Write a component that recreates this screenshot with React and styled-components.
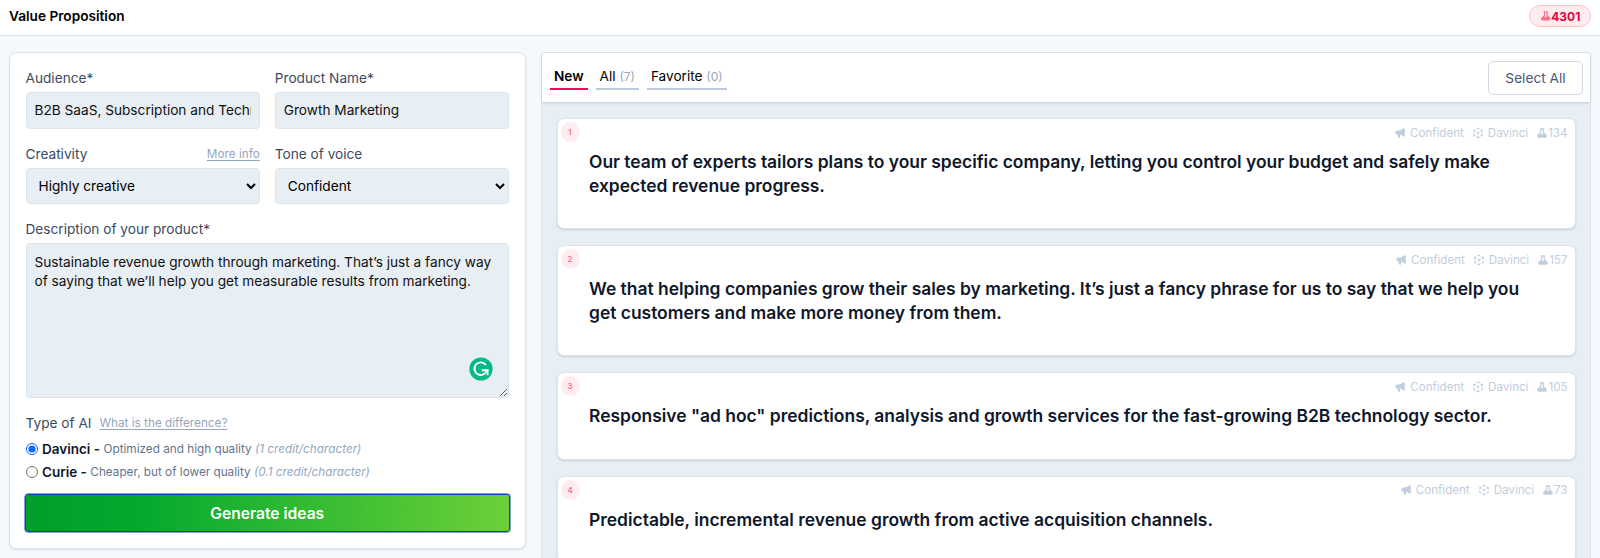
import React from 'react'
import styled, { createGlobalStyle } from 'styled-components';
import { HiBeaker, HiCubeTransparent, HiSpeakerphone } from 'react-icons/hi';

const GlobalStyle = createGlobalStyle`
    :root {
        --text: #0f172a;
        --label: #3b4a60;
        --muted: #64748b;
        --link: #94a7bf;
        --line: #dce5ee;
        --field: #e7eef4;
    }
    * {
        box-sizing: border-box;
    }
    body {
        margin: 0;
        background-color: #f5f9fc;
        color: #000;
        font-family: Inter, sans-serif;
        font-size: 13.66px;
        overflow: hidden;
    }
`;

const PageStyle = styled.div`
    height: 558px;
    overflow: hidden;
`;

const TopBar = styled.header`
    height: 36px;
    padding: 0 9px;
    display: flex;
    align-items: center;
    justify-content: space-between;
    background-color: #fff;
    border-bottom: 1px solid var(--line);
    h1 {
        margin: 0 0 3px;
        font-size: 13.65px;
        font-weight: 600;
    }
`;

const Credits = styled.span`
    height: 22px;
    width: 62px;
    margin-bottom: 3px;
    display: flex;
    align-items: center;
    justify-content: center;
    border: 1px solid #ffc2cc;
    border-radius: 11px;
    background-color: #ffecef;
    color: #e8003f;
    font-size: 12px;
    font-weight: 700;
    svg {
        color: #ff6c8a;
        font-size: 11.6px;
    }
`;

const Columns = styled.main`
    display: grid;
    grid-template-columns: 517px 1fr;
    align-items: start;
    gap: 15.5px;
    padding: 16px 9px 0 8.5px;
`;

const FormCard = styled.form`
    height: 497px;
    padding: 15px 15.5px 15px 16px;
    background-color: #fff;
    border: 1px solid var(--line);
    border-radius: 7px;
    box-shadow: 0 1px 2px rgba(15, 23, 42, 0.12);
`;

const FieldGrid = styled.div`
    display: grid;
    grid-template-columns: 1fr 1fr;
    gap: 15px 15px;
    margin-bottom: 15px;
`;

const LabelRow = styled.div`
    height: 20px;
    margin-bottom: 4px;
    display: flex;
    align-items: center;
    justify-content: ${props => props.$spread ? 'space-between' : 'flex-start'};
    gap: 8px;
    color: var(--label);
`;

const HelpLink = styled.a`
    color: var(--link);
    font-size: 11.75px;
    text-decoration: underline;
    text-underline-offset: 2px;
`;

const Input = styled.input`
    display: block;
    width: 100%;
    height: 37px;
    padding: 0 8px 1px;
    border: 1px solid var(--line);
    border-radius: 4px;
    background-color: var(--field);
    color: #111;
    font: inherit;
`;

const Select = styled.select`
    display: block;
    width: 100%;
    height: 36px;
    padding: 0 2px 0 8px;
    border: 1px solid var(--line);
    border-radius: 4px;
    background-color: var(--field);
    color: #000;
    font: inherit;
`;

const TextAreaWrap = styled.div`
    position: relative;
    height: 155px;
    margin-bottom: 15px;
    textarea {
        display: block;
        width: 100%;
        height: 155px;
        padding: 9px 8px;
        border: 1px solid var(--line);
        border-radius: 4px;
        background-color: var(--field);
        color: #111;
        font: inherit;
        line-height: 19.4px;
    }
    svg {
        position: absolute;
        right: 16px;
        bottom: 17px;
    }
`;

const RadioRow = styled.label`
    height: 23px;
    display: flex;
    align-items: center;
    color: var(--muted);
    font-size: 11.75px;
    white-space: pre;
    input {
        width: 12px;
        height: 12px;
        margin: 0 4.5px 0 0;
        accent-color: #0a66ff;
    }
    b {
        color: var(--text);
        font-size: 13.5px;
        font-weight: 600;
    }
    em {
        color: var(--link);
    }
`;

const GenerateButton = styled.button`
    display: block;
    width: calc(100% + 2px);
    height: 38px;
    margin: 11px -1px 0;
    border: 1.5px solid #0b3fc4;
    border-radius: 3px;
    background: linear-gradient(to right, #009e2a, #02a92e 23%, #6dd038) border-box;
    box-shadow: 0 0 0 0.5px #0b3fc4;
    color: #fff;
    font-family: inherit;
    font-size: 15.6px;
    font-weight: 600;
`;

const Results = styled.section`
    height: 520px;
    border: 1px solid var(--line);
    border-radius: 4px 4px 0 0;
    background-color: var(--field);
`;

const ResultsBar = styled.div`
    height: 49px;
    padding: 0 7px 0 8px;
    display: flex;
    align-items: center;
    justify-content: space-between;
    border-radius: 3px 3px 0 0;
    background-color: #fff;
    box-shadow: 0 1px 3px rgba(15, 23, 42, 0.16);
`;

const Tabs = styled.div`
    display: flex;
    gap: 8px;
`;

const Tab = styled.button`
    height: 25px;
    padding: 0 4px 2px;
    border: 0;
    border-bottom: 2px solid ${props => props.$active ? '#f5055b' : '#bccadb'};
    background: none;
    color: #000;
    font-family: inherit;
    font-size: 13.6px;
    font-weight: ${props => props.$active ? 600 : 400};
    span {
        color: var(--link);
        font-size: 12px;
    }
`;

const SelectAll = styled.button`
    width: 95px;
    height: 34px;
    border: 1px solid #cfdae6;
    border-radius: 5px;
    background-color: #fff;
    color: #475872;
    font-family: inherit;
    font-size: 13.7px;
`;

const IdeaList = styled.div`
    display: flex;
    flex-direction: column;
    gap: 16px;
    padding: 16.4px 14.5px 0;
`;

const IdeaCard = styled.article`
    padding: 3px 7px 31px 3px;
    border: 1px solid var(--line);
    border-radius: 7px;
    background-color: #fff;
    box-shadow: 0 1px 2px rgba(15, 23, 42, 0.14);
    p {
        max-width: 940px;
        margin: 8px 0 0 28.5px;
        color: var(--text);
        font-size: 17.43px;
        font-weight: 600;
        line-height: 23.5px;
    }
`;

const IdeaHead = styled.div`
    display: flex;
    justify-content: space-between;
    height: 20px;
`;

const Num = styled.span`
    width: 19px;
    height: 20px;
    display: flex;
    align-items: center;
    justify-content: center;
    border-radius: 50%;
    background-color: #ffecef;
    color: #fb6f92;
    font-size: 7.8px;
    font-weight: 600;
`;

const Meta = styled.div`
    display: flex;
    align-items: center;
    gap: 8px;
    padding-top: 1px;
    color: #c0cedd;
    font-size: 11.6px;
    span {
        display: flex;
        align-items: center;
        gap: 4px;
    }
    span:last-child {
        gap: 0;
    }
    svg {
        font-size: 12px;
    }
`;

const ideas = [
  { text: 'Our team of experts tailors plans to your specific company, letting you control your budget and safely make expected revenue progress.', credits: 134 },
  { text: 'We that helping companies grow their sales by marketing. It’s just a fancy phrase for us to say that we help you get customers and make more money from them.', credits: 157 },
  { text: 'Responsive "ad hoc" predictions, analysis and growth services for the fast-growing B2B technology sector.', credits: 105 },
  { text: 'Predictable, incremental revenue growth from active acquisition channels.', credits: 73 },
];

function GrammarBadge() {
  return (
    <svg width="24" height="24" viewBox="0 0 24 24" fill="none">
      <circle cx="12" cy="12" r="11.6" fill="#03b98b" />
      <path d="M16.4 7.4A6.3 6.3 0 1 0 17.6 14" stroke="#fff" strokeWidth="1.9" strokeLinecap="round" />
      <path d="M12.8 13.2H18.6V18.2" stroke="#fff" strokeWidth="1.9" />
    </svg>
  )
}

function IdeaForm() {
  return (
    <FormCard>
      <FieldGrid>
        <div>
          <LabelRow>Audience*</LabelRow>
          <Input defaultValue="B2B SaaS, Subscription and Technology" />
        </div>
        <div>
          <LabelRow>Product Name*</LabelRow>
          <Input defaultValue="Growth Marketing" />
        </div>
        <div>
          <LabelRow $spread>Creativity <HelpLink>More info</HelpLink></LabelRow>
          <Select><option>Highly creative</option></Select>
        </div>
        <div>
          <LabelRow>Tone of voice</LabelRow>
          <Select><option>Confident</option></Select>
        </div>
      </FieldGrid>
      <LabelRow>Description of your product*</LabelRow>
      <TextAreaWrap>
        <textarea
          spellCheck={false}
          defaultValue="Sustainable revenue growth through marketing. That’s just a fancy way of saying that we’ll help you get measurable results from marketing."
        />
        <GrammarBadge />
      </TextAreaWrap>
      <LabelRow>Type of AI <HelpLink>What is the difference?</HelpLink></LabelRow>
      <RadioRow>
        <input type="radio" name="engine" defaultChecked />
        <b>Davinci - </b>Optimized and high quality <em>(1 credit/character)</em>
      </RadioRow>
      <RadioRow>
        <input type="radio" name="engine" />
        <b>Curie - </b>Cheaper, but of lower quality <em>(0.1 credit/character)</em>
      </RadioRow>
      <GenerateButton type="button">Generate ideas</GenerateButton>
    </FormCard>
  )
}

function Idea({ number, text, credits }) {
  return (
    <IdeaCard>
      <IdeaHead>
        <Num>{number}</Num>
        <Meta>
          <span><HiSpeakerphone />Confident</span>
          <span><HiCubeTransparent />Davinci</span>
          <span><HiBeaker />{credits}</span>
        </Meta>
      </IdeaHead>
      <p>{text}</p>
    </IdeaCard>
  )
}

export default function App() {
  return (
    <PageStyle>
      <GlobalStyle />
      <TopBar>
        <h1>Value Proposition</h1>
        <Credits><HiBeaker />4301</Credits>
      </TopBar>
      <Columns>
        <IdeaForm />
        <Results>
          <ResultsBar>
            <Tabs>
              <Tab $active>New</Tab>
              <Tab>All <span>(7)</span></Tab>
              <Tab>Favorite <span>(0)</span></Tab>
            </Tabs>
            <SelectAll>Select All</SelectAll>
          </ResultsBar>
          <IdeaList>
            {ideas.map((idea, i) => (
              <Idea key={idea.credits} number={i + 1} text={idea.text} credits={idea.credits} />
            ))}
          </IdeaList>
        </Results>
      </Columns>
    </PageStyle>
  )
}
